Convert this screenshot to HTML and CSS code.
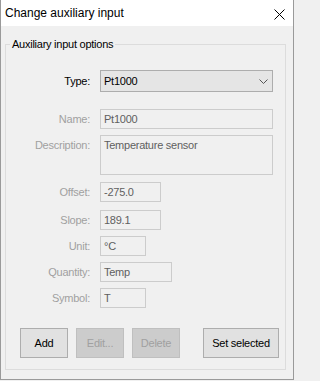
FILE: index.html
```html
<!DOCTYPE html>
<html>
<head>
<meta charset="utf-8">
<link rel="stylesheet" href="styles.css">
</head>
<body>
<div class="window">
  <div class="titlebar">
    <span class="title">Change auxiliary input</span>
    <svg class="close" width="11" height="11" viewBox="0 0 11 11"><path d="M0.5 0.5 L10.5 10.5 M10.5 0.5 L0.5 10.5" stroke="#000" stroke-width="1" fill="none"/></svg>
  </div>
  <div class="client">
    <fieldset class="group">
      <legend class="legend">Auxiliary input options</legend>
      <div class="row row-type">
        <span class="label label-on">Type:</span>
        <div class="combo">
          <span class="combo-text">Pt1000</span>
          <svg class="chev" width="9" height="5" viewBox="0 0 9 5"><path d="M0.5 0.5 L4.5 4.5 L8.5 0.5" stroke="#555" stroke-width="1" fill="none"/></svg>
        </div>
      </div>
      <div class="row row-name">
        <span class="label">Name:</span>
        <div class="box w-full">Pt1000</div>
      </div>
      <div class="row">
        <span class="label">Description:</span>
        <div class="box box-multi w-full">Temperature sensor</div>
      </div>
      <div class="row row-offset">
        <span class="label">Offset:</span>
        <div class="box w-num">-275.0</div>
      </div>
      <div class="row row-slope">
        <span class="label">Slope:</span>
        <div class="box w-num">189.1</div>
      </div>
      <div class="row">
        <span class="label">Unit:</span>
        <div class="box w-small">°C</div>
      </div>
      <div class="row">
        <span class="label">Quantity:</span>
        <div class="box w-qty">Temp</div>
      </div>
      <div class="row">
        <span class="label">Symbol:</span>
        <div class="box w-small">T</div>
      </div>
      <div class="buttons">
        <button class="btn">Add</button>
        <button class="btn btn-off">Edit...</button>
        <button class="btn btn-off">Delete</button>
        <button class="btn btn-wide">Set selected</button>
      </div>
    </fieldset>
  </div>
</div>
</body>
</html>
```
FILE: styles.css
```css
html, body {
  margin: 0;
  padding: 0;
  background: #f0f0f0;
}
.window {
  width: 294px;
  height: 380px;
  box-sizing: border-box;
  background: #f0f0f0;
  border: 1px solid #9a9a9a;
  border-top: none;
  font-family: "Liberation Sans", Arial, sans-serif;
  font-size: 11px;
  letter-spacing: -0.25px;
  color: #000;
}
.titlebar {
  height: 26px;
  background: #fff;
  display: flex;
  align-items: flex-start;
  justify-content: space-between;
}
.title {
  font-size: 12px;
  letter-spacing: 0;
  line-height: 26px;
  padding-left: 4px;
}
.close {
  margin-top: 9px;
  margin-right: 8px;
}
.client {
  padding: 12px 7px 9px 4px;
}
.group {
  margin: 0;
  padding: 19px 0 11px 0;
  border: 1px solid #dcdcdc;
  min-width: 0;
  display: flex;
  flex-direction: column;
}
.legend {
  margin-left: 4px;
  padding: 0 2px;
  line-height: 13px;
  color: #000;
}
.row {
  display: flex;
  align-items: flex-start;
  gap: 10px;
  margin-top: 6px;
}
.row-type {
  margin-top: 0;
  align-items: center;
}
.row-name { margin-top: 17px; }
.row-offset { margin-top: 7px; }
.row-slope { margin-top: 8px; }
.label {
  width: 84px;
  flex: none;
  text-align: right;
  line-height: 20px;
  color: #a0a0a0;
}
.label-on { color: #000; }
.combo {
  width: 173px;
  height: 22px;
  box-sizing: border-box;
  border: 1px solid #adadad;
  background: #e5e5e5;
  display: flex;
  align-items: center;
  padding: 0 4px 0 3px;
}
.combo-text {
  flex: 1;
  line-height: 20px;
}
.chev {
  margin-top: 1px;
}
.box {
  height: 20px;
  box-sizing: border-box;
  border: 1px solid #cccccc;
  background: #f0f0f0;
  color: #5f5f5f;
  padding-left: 3px;
  line-height: 18px;
  white-space: nowrap;
}
.box-multi { height: 40px; }
.w-full { width: 173px; }
.w-num { width: 61px; }
.w-small { width: 46px; }
.w-qty { width: 72px; }
.buttons {
  display: flex;
  gap: 8px;
  margin-top: 20px;
  padding-left: 14px;
}
.btn {
  width: 48px;
  height: 30px;
  box-sizing: border-box;
  margin: 0;
  padding: 0;
  border: 1px solid #adadad;
  background: #e1e1e1;
  font-family: "Liberation Sans", Arial, sans-serif;
  font-size: 11px;
  letter-spacing: -0.25px;
  color: #000;
}
.btn-off {
  background: #cccccc;
  border-color: #bfbfbf;
  color: #a0a0a0;
}
.btn-wide {
  width: 76px;
  margin-left: 15px;
}
```
